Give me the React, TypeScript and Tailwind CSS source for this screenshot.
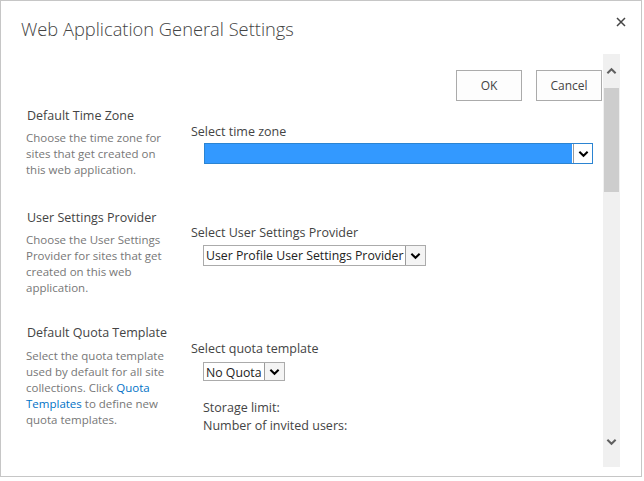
import React from 'react'

const font = { fontFamily: '"Open Sans", "Noto Sans", sans-serif' }

function Chevron({ className }: { className?: string }) {
  return (
    <svg viewBox="0 0 12 8" className={className}>
      <path d="M1.5 1.5 L6 6 L10.5 1.5" fill="none" stroke="currentColor" strokeWidth="2.2" />
    </svg>
  )
}

function SelectBox({ value, className }: { value: string; className: string }) {
  return (
    <div className={`inline-flex border border-[#ababab] bg-white ${className}`}>
      <div className="pl-[2px] pr-[2px] text-[12.3px] leading-[19px] text-[#222] whitespace-nowrap">
        {value}
      </div>
      <div className="w-[20px] flex items-center justify-center border-l border-[#9a9a9a] bg-[#f4f4f4]">
        <Chevron className="w-[11px] h-[8px] text-black" />
      </div>
    </div>
  )
}

export default function App() {
  return (
    <div className="w-[644px] h-[481px] bg-white" style={font}>
      <div className="w-[642px] h-[477px] border border-[#c6c6c6] flex flex-col">
        {/* header */}
        <div className="h-[53px] flex justify-between items-start">
          <h1 className="pl-[20px] pt-[14px] text-[18.3px] leading-[28px] font-light text-[#444]">
            Web Application General Settings
          </h1>
          <button className="mt-[16px] mr-[15px] w-[10px] h-[10px] text-[#444]">
            <svg viewBox="0 0 10 10" className="w-[10px] h-[10px]">
              <path d="M1 1 L9 9 M9 1 L1 9" stroke="currentColor" strokeWidth="1.5" fill="none" />
            </svg>
          </button>
        </div>

        {/* body */}
        <div className="h-[413px] flex">
          <div className="flex-1 overflow-hidden">
            <div className="pt-[16px] pr-[1px] flex justify-end gap-[14px]">
              <button className="w-[66px] h-[31px] border border-[#ababab] bg-[#fdfdfd] text-[12px] text-[#444]">
                OK
              </button>
              <button className="w-[66px] h-[31px] border border-[#ababab] bg-[#fdfdfd] text-[12px] text-[#444]">
                Cancel
              </button>
            </div>

            <div className="mt-[7px] pl-[25px]">
              {/* time zone */}
              <div className="h-[102px] flex">
                <div className="w-[165px]">
                  <h3 className="pl-[1px] text-[12.5px] leading-[16px] text-[#444]">Default Time Zone</h3>
                  <p className="mt-[6px] w-[145px] text-[11.5px] leading-[16px] text-[#777]">
                    Choose the time zone for sites that get created on this web application.
                  </p>
                </div>
                <div className="pt-[15px]">
                  <div className="text-[12.5px] leading-[18px] text-[#444]">Select time zone</div>
                  <div className="mt-[2px] ml-[13px] w-[389px] h-[21px] flex border border-[#2b84d2] bg-[#3399ff]">
                    <div className="flex-1 border-r border-white" />
                    <div className="w-[19px] flex items-center justify-center border-l border-[#9a9a9a] bg-white">
                      <Chevron className="w-[11px] h-[8px] text-black" />
                    </div>
                  </div>
                </div>
              </div>

              {/* user settings provider */}
              <div className="h-[115px] flex">
                <div className="w-[165px]">
                  <h3 className="pl-[1px] text-[12.5px] leading-[16px] text-[#444]">User Settings Provider</h3>
                  <p className="mt-[6px] w-[145px] text-[11.5px] leading-[16px] text-[#777]">
                    Choose the User Settings Provider for sites that get created on this web application.
                  </p>
                </div>
                <div className="pt-[14px]">
                  <div className="text-[12.5px] leading-[18px] text-[#444]">Select User Settings Provider</div>
                  <SelectBox value="User Profile User Settings Provider" className="mt-[2px] ml-[12px] h-[21px]" />
                </div>
              </div>

              {/* quota */}
              <div className="flex">
                <div className="w-[165px]">
                  <h3 className="pl-[1px] text-[12.5px] leading-[16px] text-[#444]">Default Quota Template</h3>
                  <p className="mt-[7px] w-[145px] text-[11.5px] leading-[16px] text-[#777]">
                    Select the quota template used by default for all site collections. Click{' '}
                    <a className="text-[#0072c6]">Quota Templates</a> to define new quota templates.
                  </p>
                </div>
                <div className="pt-[15px]">
                  <div className="text-[12.5px] leading-[18px] text-[#444]">Select quota template</div>
                  <div>
                    <SelectBox value="No Quota" className="mt-[4px] ml-[12px] h-[19px]" />
                  </div>
                  <div className="mt-[16px] ml-[12px] text-[12.5px] leading-[18px] text-[#444]">
                    <div>Storage limit:</div>
                    <div>Number of invited users:</div>
                  </div>
                </div>
              </div>
            </div>
          </div>

          {/* scrollbar */}
          <div className="w-[17px] bg-[#f0f0f0] flex flex-col items-center">
            <div className="h-[34px] flex items-center justify-center text-[#606060]">
              <Chevron className="w-[11px] h-[8px] rotate-180" />
            </div>
            <div className="w-[15px] h-[104px] bg-[#cdcdcd]" />
            <div className="flex-1" />
            <div className="h-[29px] flex items-start justify-center text-[#606060]">
              <Chevron className="w-[11px] h-[8px]" />
            </div>
          </div>
          <div className="w-[21px]" />
        </div>
      </div>
    </div>
  )
}
